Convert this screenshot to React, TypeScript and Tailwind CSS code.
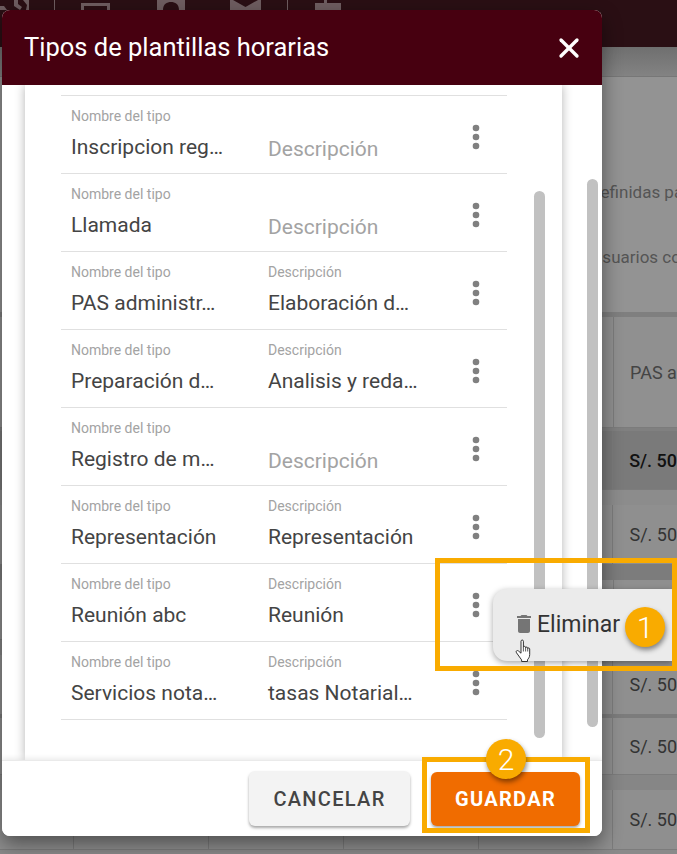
import React from 'react';
import { X } from 'lucide-react';

const rows = [
  { name: 'Inscripcion reg…', desc: '' },
  { name: 'Llamada', desc: '' },
  { name: 'PAS administr…', desc: 'Elaboración d…' },
  { name: 'Preparación d…', desc: 'Analisis y reda…' },
  { name: 'Registro de m…', desc: '' },
  { name: 'Representación', desc: 'Representación' },
  { name: 'Reunión abc', desc: 'Reunión' },
  { name: 'Servicios nota…', desc: 'tasas Notarial…' },
];

const Kebab = () => (
  <svg width="36" height="36" viewBox="0 0 24 24" className="fill-[#808080]">
    <circle cx="12" cy="6" r="2.2" />
    <circle cx="12" cy="12" r="2.2" />
    <circle cx="12" cy="18" r="2.2" />
  </svg>
);

const Row = ({ name, desc }: { name: string; desc: string }) => (
  <div className="flex h-[78px] border-b border-[#e0e0e0] pl-[10px] relative">
    <div className="w-[197px] pt-[11px]">
      <div className="text-[14px] leading-[18px] text-[#a3a3a3]">Nombre del tipo</div>
      <div className="text-[21px] leading-[28px] mt-[8px] text-[#444] whitespace-nowrap">{name}</div>
    </div>
    <div className="w-[190px] pt-[11px]">
      {desc ? (
        <>
          <div className="text-[14px] leading-[18px] text-[#a3a3a3]">Descripción</div>
          <div className="text-[21px] leading-[28px] mt-[8px] text-[#444] whitespace-nowrap">{desc}</div>
        </>
      ) : (
        <div className="text-[21px] leading-[28px] mt-[28px] text-[#a3a3a3]">Descripción</div>
      )}
    </div>
    <div className="pt-[23px]">
      <Kebab />
    </div>
  </div>
);

const Scrollbar = ({ cls }: { cls: string }) => <div className={'w-[11px] rounded-full bg-[#c1c1c1] ' + cls} />;

const Badge = ({ n, cls }: { n: number; cls: string }) => (
  <div className={'absolute z-20 w-[40px] h-[40px] rounded-full bg-[#f9ab00] text-white text-[30px] font-light flex items-center justify-center shadow-[1px_3px_5px_rgba(0,0,0,0.45)] ' + cls}>
    {n}
  </div>
);

const Hand = () => (
  <svg width="18" height="24" viewBox="0 0 18 24" className="absolute z-20 left-[515px] top-[639px]">
    <path
      d="M6 2.200c0-1.600 2.400-1.600 2.400 0v6.200c0-1.400 2.200-1.400 2.200 0v.6c0-1.300 2.100-1.300 2.100.1v.7c0-1.200 2-1.200 2 .2v5.600c0 2.600-1.300 4-2.200 5.200v1.700H6.600v-1.600L1.500 13.800c-1.200-1.700.8-3 2-1.800L6 14.200z"
      fill="#fff"
      stroke="#333"
      strokeWidth="1"
      strokeLinejoin="round"
    />
    <path d="M8.400 8.500v4M10.600 9v3.500M12.700 10v2.500" fill="none" stroke="#333" strokeWidth="0.8" />
  </svg>
);

// fila de la tabla de fondo, con lineas de columna cada 135px
const BgRow = ({ h, cls, text }: { h: string; cls: string; text?: string }) => (
  <div className={'flex border-b border-[#7c7c7c] ' + h + ' ' + cls}>
    <div className="w-[74px] border-r border-[#7c7c7c]" />
    <div className="w-[135px] border-r border-[#7c7c7c]" />
    <div className="w-[135px] border-r border-[#7c7c7c]" />
    <div className="w-[135px] border-r border-[#7c7c7c]" />
    <div className="w-[135px] border-r border-[#7c7c7c]" />
    <div className="flex-1 flex items-center pl-[16px] whitespace-nowrap">{text}</div>
  </div>
);

const TopIcons = () => (
  <svg width="360" height="10" viewBox="0 0 360 10" className="block">
    <g fill="#6e5d60">
      <path d="M0 6h4l3 4H0zM14 0h4v4l4 3-2 3-6-4zM23 0h6v10h-3l1-5z" />
      <rect x="54" y="0" width="1" height="10" />
      <path d="M81 3h29v7h-3V6H84v4h-3z" />
      <path d="M157 0h28v10h-6c0-6-4-8-8-8s-8 2-8 8h-6z" />
      <path d="M230 0h31v10h-31z" />
      <rect x="287" y="0" width="1" height="10" />
      <path d="M315 3h9V0h3v3h14v7h-26z" />
    </g>
    <path d="M233 0l12.500 7L258 0z" fill="#2a0f14" />
  </svg>
);

export default function App() {
  return (
    <div className="relative w-[677px] h-[854px] overflow-hidden bg-[#8a8a8a]" style={{ fontFamily: 'Roboto, sans-serif' }}>
      {/* pagina de fondo */}
      <div className="h-[47px] bg-[#2a0f14]">
        <TopIcons />
      </div>
      <div className="h-[30px] bg-gradient-to-b from-[#6f6f6f] to-[#838383] border-b border-[#777]" />
      <div className="h-[235px] bg-[#939393] text-[#555] text-[17px] leading-[24px] pl-[591px] overflow-hidden">
        <div className="pt-[103px] whitespace-nowrap">definidas para</div>
        <div className="pt-[41px] whitespace-nowrap pl-[2px]">usuarios con</div>
      </div>
      <div className="h-[5px] bg-[#7f7f7f]" />
      <div className="text-[#333] text-[18px]">
        <BgRow h="h-[111px]" cls="bg-[#909090] text-[#444]" text="PAS a" />
        <div className="h-[3px] bg-[#808080]" />
        <BgRow h="h-[59px]" cls="bg-[#7a7a7a] text-[#111] font-medium" text="S/. 50" />
        <div className="h-[15px] bg-[#8c8c8c]" />
        <BgRow h="h-[60px]" cls="bg-[#8f8f8f]" text="S/. 50" />
        <div className="h-[15px] bg-[#7c7c7c]" />
        <BgRow h="h-[60px]" cls="bg-[#8f8f8f]" />
        <div className="h-[15px] bg-[#868686]" />
        <BgRow h="h-[60px]" cls="bg-[#8f8f8f]" text="S/. 50" />
        <div className="h-[3px] bg-[#7c7c7c]" />
        <BgRow h="h-[57px]" cls="bg-[#8f8f8f]" text="S/. 50" />
        <div className="h-[15px] bg-[#868686]" />
        <BgRow h="h-[60px]" cls="bg-[#8f8f8f]" text="S/. 50" />
      </div>

      {/* dialogo */}
      <div className="absolute left-[2px] top-[10px] w-[600px] h-[826px] rounded-[8px] overflow-hidden bg-white flex flex-col shadow-[0_8px_20px_rgba(0,0,0,0.45)]">
        <div className="h-[75px] shrink-0 bg-[#470010] flex items-center justify-between pl-[22px] pr-[17px] z-10">
          <h2 className="text-white text-[25.500px] font-normal">Tipos de plantillas horarias</h2>
          <X size={32} color="#fff" strokeWidth={2.5} />
        </div>
        <div className="flex-1 flex pl-[23px] overflow-hidden">
          <div className="w-[537px] bg-white flex shadow-[0_0_10px_rgba(0,0,0,0.3)] pl-[36px]">
            <div className="w-[446px] pt-[10px]">
              <div className="border-t border-[#e0e0e0]">
                {rows.map((r) => (
                  <Row key={r.name} name={r.name} desc={r.desc} />
                ))}
              </div>
            </div>
            <Scrollbar cls="ml-[27px] mt-[106px] h-[547px]" />
          </div>
          <Scrollbar cls="ml-[25px] mt-[94px] h-[548px]" />
        </div>
        <div className="h-[76px] shrink-0 bg-white flex items-center justify-end gap-[21px] pr-[22px] z-10 border-t border-[#eaeaea] shadow-[0_-2px_5px_rgba(0,0,0,0.08)]">
          <button className="w-[161px] h-[55px] rounded-[6px] bg-[#f3f3f3] text-[#444] font-medium text-[20px] tracking-[1.3px] shadow-[0_2px_3px_rgba(0,0,0,0.35)]">CANCELAR</button>
          <button className="w-[149px] h-[54px] rounded-[6px] bg-[#f06c00] text-white font-bold text-[20px] tracking-[1.300px] shadow-[0_2px_3px_rgba(0,0,0,0.35)]">GUARDAR</button>
        </div>
      </div>

      {/* menu contextual */}
      <div className="absolute z-20 left-[493px] top-[589px] w-[179px] h-[72px] rounded-l-[14px] bg-[#ebebeb] shadow-[0_2px_6px_rgba(0,0,0,0.35)] flex items-center pl-[19px] text-[#333] text-[23px]">
        <svg width="24" height="24" viewBox="0 0 24 24" className="fill-[#757575] shrink-0 mr-[1px] -mt-[3px]">
          <path d="M6 19c0 1.100.9 2 2 2h8c1.100 0 2-.9 2-2V7H6v12zM19 4h-3.500l-1-1h-5l-1 1H5v2h14V4z" />
        </svg>
        Eliminar
      </div>
      <Hand />

      {/* marcas de la guia */}
      <div className="absolute z-20 left-[435px] top-[558px] w-[242px] h-[113px] border-[5px] border-[#f9ab00]" />
      <div className="absolute z-20 left-[422px] top-[757px] w-[168px] h-[76px] border-[5px] border-[#f9ab00]" />
      <Badge n={1} cls="left-[625px] top-[607px]" />
      <Badge n={2} cls="left-[486px] top-[739px]" />
    </div>
  );
}
